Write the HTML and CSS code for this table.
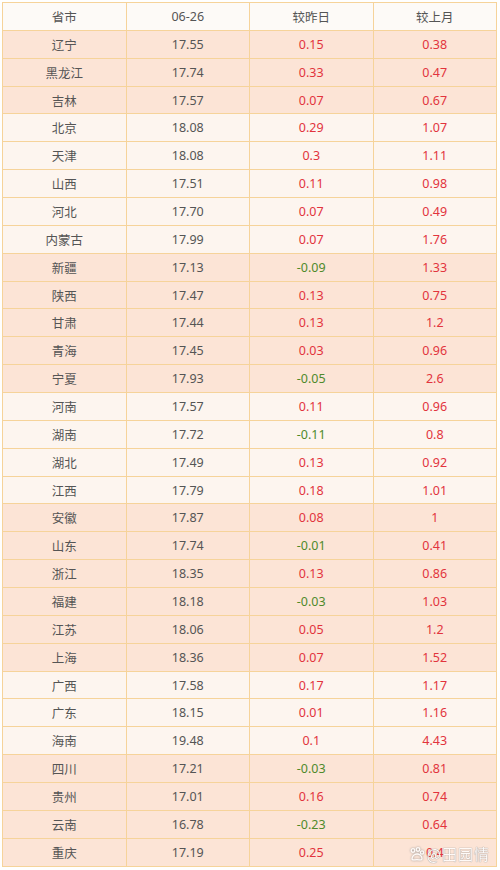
FILE: index.html
```html
<!DOCTYPE html>
<html lang="zh">
<head>
<meta charset="utf-8">
<link rel="stylesheet" href="styles.css">
</head>
<body>
<div class="wrap">
<table class="tbl">
<thead>
<tr class="hd"><th>省市</th><th>06-26</th><th>较昨日</th><th>较上月</th></tr>
</thead>
<tbody>
<tr class="pk"><td>辽宁</td><td>17.55</td><td class="up">0.15</td><td class="up">0.38</td></tr>
<tr class="pk"><td>黑龙江</td><td>17.74</td><td class="up">0.33</td><td class="up">0.47</td></tr>
<tr class="pk"><td>吉林</td><td>17.57</td><td class="up">0.07</td><td class="up">0.67</td></tr>
<tr class="lt"><td>北京</td><td>18.08</td><td class="up">0.29</td><td class="up">1.07</td></tr>
<tr class="lt"><td>天津</td><td>18.08</td><td class="up">0.3</td><td class="up">1.11</td></tr>
<tr class="lt"><td>山西</td><td>17.51</td><td class="up">0.11</td><td class="up">0.98</td></tr>
<tr class="lt"><td>河北</td><td>17.70</td><td class="up">0.07</td><td class="up">0.49</td></tr>
<tr class="lt"><td>内蒙古</td><td>17.99</td><td class="up">0.07</td><td class="up">1.76</td></tr>
<tr class="pk"><td>新疆</td><td>17.13</td><td class="dn">-0.09</td><td class="up">1.33</td></tr>
<tr class="pk"><td>陕西</td><td>17.47</td><td class="up">0.13</td><td class="up">0.75</td></tr>
<tr class="pk"><td>甘肃</td><td>17.44</td><td class="up">0.13</td><td class="up">1.2</td></tr>
<tr class="pk"><td>青海</td><td>17.45</td><td class="up">0.03</td><td class="up">0.96</td></tr>
<tr class="pk"><td>宁夏</td><td>17.93</td><td class="dn">-0.05</td><td class="up">2.6</td></tr>
<tr class="lt"><td>河南</td><td>17.57</td><td class="up">0.11</td><td class="up">0.96</td></tr>
<tr class="lt"><td>湖南</td><td>17.72</td><td class="dn">-0.11</td><td class="up">0.8</td></tr>
<tr class="lt"><td>湖北</td><td>17.49</td><td class="up">0.13</td><td class="up">0.92</td></tr>
<tr class="lt"><td>江西</td><td>17.79</td><td class="up">0.18</td><td class="up">1.01</td></tr>
<tr class="pk"><td>安徽</td><td>17.87</td><td class="up">0.08</td><td class="up">1</td></tr>
<tr class="pk"><td>山东</td><td>17.74</td><td class="dn">-0.01</td><td class="up">0.41</td></tr>
<tr class="pk"><td>浙江</td><td>18.35</td><td class="up">0.13</td><td class="up">0.86</td></tr>
<tr class="pk"><td>福建</td><td>18.18</td><td class="dn">-0.03</td><td class="up">1.03</td></tr>
<tr class="pk"><td>江苏</td><td>18.06</td><td class="up">0.05</td><td class="up">1.2</td></tr>
<tr class="pk"><td>上海</td><td>18.36</td><td class="up">0.07</td><td class="up">1.52</td></tr>
<tr class="lt"><td>广西</td><td>17.58</td><td class="up">0.17</td><td class="up">1.17</td></tr>
<tr class="lt"><td>广东</td><td>18.15</td><td class="up">0.01</td><td class="up">1.16</td></tr>
<tr class="lt"><td>海南</td><td>19.48</td><td class="up">0.1</td><td class="up">4.43</td></tr>
<tr class="pk"><td>四川</td><td>17.21</td><td class="dn">-0.03</td><td class="up">0.81</td></tr>
<tr class="pk"><td>贵州</td><td>17.01</td><td class="up">0.16</td><td class="up">0.74</td></tr>
<tr class="pk"><td>云南</td><td>16.78</td><td class="dn">-0.23</td><td class="up">0.64</td></tr>
<tr class="pk"><td>重庆</td><td>17.19</td><td class="up">0.25</td><td class="up">0.4</td></tr>
</tbody>
</table>
<div class="mark">
<svg class="mark-icon" width="16" height="14" viewBox="0 0 16 14"><g fill="none" stroke="#ffffff" stroke-width="1.3"><circle cx="4" cy="3.5" r="1.8"/><circle cx="9" cy="2.5" r="1.8"/><circle cx="13" cy="5.5" r="1.6"/><path d="M3 12c0-3 2.5-5 5-5s5 2 5 4.5c0 1.5-1.5 1.5-3 1.3-1.4-.2-2.6-.2-4 0-1.6.2-3 .2-3-.8z"/></g></svg>
<span class="mark-text">@田园情</span>
</div>
</div>
</body>
</html>
```
FILE: styles.css
```css
html, body {
  margin: 0;
  padding: 0;
  background: #ffffff;
}
.wrap {
  position: relative;
  width: 500px;
  height: 870px;
  padding: 2px 0 0 2px;
  box-sizing: border-box;
}
.tbl {
  border-collapse: collapse;
  table-layout: fixed;
  width: 495px;
  font-family: "Noto Sans", "Noto Sans CJK SC", sans-serif;
  font-size: 12.5px;
  color: #555555;
}
.tbl th, .tbl td {
  border: 1px solid #f6d39a;
  text-align: center;
  vertical-align: middle;
  padding: 0;
  font-weight: normal;
  height: 26.87px;
}
.hd { background: #fdfaf7; }
.pk { background: #fce4d6; }
.lt { background: #fdf5ef; }
.up { color: #e2343d; }
.dn { color: #4f8a2b; }
.mark {
  position: absolute;
  right: 10px;
  bottom: 6px;
  display: flex;
  align-items: center;
  gap: 2px;
  opacity: 0.85;
}
.mark-text {
  font-family: "Noto Sans CJK SC", sans-serif;
  font-size: 15px;
  color: #ffffff;
  text-shadow: 0 0 1px #8a8a8a, 0 0 1px #8a8a8a;
  letter-spacing: 1px;
}
.mark-icon { filter: drop-shadow(0 0 1px #888); }
```
